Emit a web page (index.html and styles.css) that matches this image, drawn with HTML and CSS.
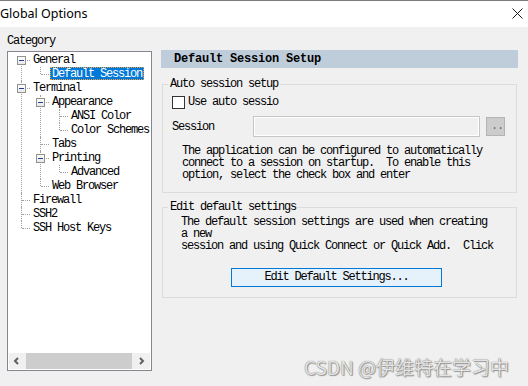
FILE: index.html
```html
<!DOCTYPE html>
<html lang="en">
<head>
    <meta charset="UTF-8">
    <title>Global Options</title>
    <link rel="stylesheet" href="styles.css">
</head>
<body>

<div class="titlebar">
    <span class="title">Global Options</span>
    <svg class="close" width="11" height="11" viewBox="0 0 11 11">
        <path d="M0.5 0.5L10.5 10.5M10.5 0.5L0.5 10.5" stroke="#1a1a1a" stroke-width="1" fill="none"/>
    </svg>
</div>

<div class="main">
    <!-- Category tree -->
    <div class="left">
        <div class="cat-label">Category</div>
        <div class="tree-box">
            <ul class="tree">
                <li>
                    <div class="row"><span class="toggle"></span><span class="label">General</span></div>
                    <ul>
                        <li><div class="row"><span class="label selected">Default Session</span></div></li>
                    </ul>
                </li>
                <li>
                    <div class="row"><span class="toggle"></span><span class="label">Terminal</span></div>
                    <ul>
                        <li>
                            <div class="row"><span class="toggle"></span><span class="label">Appearance</span></div>
                            <ul>
                                <li><div class="row"><span class="label">ANSI Color</span></div></li>
                                <li><div class="row"><span class="label">Color Schemes</span></div></li>
                            </ul>
                        </li>
                        <li><div class="row"><span class="label">Tabs</span></div></li>
                        <li>
                            <div class="row"><span class="toggle"></span><span class="label">Printing</span></div>
                            <ul>
                                <li><div class="row"><span class="label">Advanced</span></div></li>
                            </ul>
                        </li>
                        <li><div class="row"><span class="label">Web Browser</span></div></li>
                    </ul>
                </li>
                <li><div class="row"><span class="label">Firewall</span></div></li>
                <li><div class="row"><span class="label">SSH2</span></div></li>
                <li><div class="row"><span class="label">SSH Host Keys</span></div></li>
            </ul>
            <div class="hscroll">
                <span class="arrow">
                    <svg width="17" height="16" viewBox="0 0 17 16"><path d="M9 5L6 8L9 11" stroke="#606060" stroke-width="2" fill="none"/></svg>
                </span>
                <span class="thumb"></span>
                <span class="arrow arrow-right">
                    <svg width="17" height="16" viewBox="0 0 17 16"><path d="M7 5L10 8L7 11" stroke="#606060" stroke-width="2" fill="none"/></svg>
                </span>
            </div>
        </div>
    </div>

    <!-- Settings page -->
    <div class="right">
        <div class="page-header">Default Session Setup</div>

        <fieldset class="group">
            <legend>Auto session setup</legend>
            <div class="check-row">
                <span class="checkbox"></span>
                <span>Use auto sessio</span>
            </div>
            <div class="session-row">
                <span class="session-label">Session</span>
                <span class="session-input"></span>
                <span class="browse-btn">..</span>
            </div>
            <p class="help">The application can be configured to automatically
connect to a session on startup.  To enable this
option, select the check box and enter</p>
        </fieldset>

        <fieldset class="group group-edit">
            <legend>Edit default settings</legend>
            <p class="help help-edit">The default session settings are used when creating
a new
session and using Quick Connect or Quick Add.  Click</p>
            <button class="edit-btn">Edit Default Settings...</button>
        </fieldset>
    </div>
</div>

<div class="watermark">CSDN @伊维特在学习中</div>

</body>
</html>
```

FILE: styles.css
```css
* {
    box-sizing: border-box;
}
body {
    margin: 0;
    width: 528px;
    height: 386px;
    overflow: hidden;
    background-color: #f0f0f0;
    font-family: "Liberation Mono", "Noto Sans CJK SC", monospace;
    font-size: 12px;
    letter-spacing: -1.2px;
    color: #000;
    position: relative;
}

/* Window title */
.titlebar {
    height: 27px;
    background: #fff;
    border-top: 1px solid #7c7c7c;
    display: flex;
    align-items: center;
    justify-content: space-between;
    padding: 0 5px 1px 0;
}
.title {
    font-family: "Noto Sans", sans-serif;
    font-size: 12.5px;
    letter-spacing: 0;
    color: #000;
}
.close {
    display: block;
}

.main {
    display: flex;
    align-items: flex-start;
    gap: 9px;
    padding-left: 7px;
}

/* Left: category tree */
.left {
    width: 145px;
}
.cat-label {
    margin-top: 7px;
    margin-bottom: 3px;
    height: 14px;
    line-height: 14px;
}
.tree-box {
    height: 320px;
    border: 1px solid #828790;
    background: #fff;
    display: flex;
    flex-direction: column;
}
.tree, .tree ul {
    list-style: none;
    margin: 0;
    padding: 0;
}
.tree {
    flex: 1;
    padding-top: 1px;
}
.tree ul {
    padding-left: 19px;
}
.tree li {
    position: relative;
}
.tree li::before {
    content: "";
    position: absolute;
    left: 13px;
    top: 0;
    bottom: 0;
    border-left: 1px dotted #a0a0a0;
}
.tree li:last-child::before {
    bottom: auto;
    height: 7px;
}
.tree > li:first-child::before {
    top: 7px;
}
.tree li::after {
    content: "";
    position: absolute;
    left: 14px;
    top: 7px;
    width: 8px;
    border-top: 1px dotted #a0a0a0;
}
.row {
    height: 14px;
    line-height: 14px;
    padding-left: 23px;
    white-space: nowrap;
}
.label {
    display: inline-block;
    vertical-align: top;
    height: 13px;
    line-height: 14px;
    padding: 0 2px;
}
.label.selected {
    background: #0078d7;
    color: #fff;
    outline: 1px dotted #f0a040;
    outline-offset: -1px;
}
.toggle {
    position: absolute;
    left: 9px;
    top: 3px;
    width: 9px;
    height: 9px;
    border: 1px solid #919191;
    background: linear-gradient(#ffffff, #e8e8e8);
    z-index: 1;
}
.toggle::after {
    content: "";
    position: absolute;
    left: 1px;
    top: 3px;
    width: 5px;
    height: 1px;
    background: #21409a;
}
.hscroll {
    height: 16px;
    margin: 0 1px 1px 1px;
    background: #f0f0f0;
    display: flex;
}
.arrow {
    width: 17px;
    height: 16px;
}
.arrow svg {
    display: block;
}
.arrow-right {
    margin-left: auto;
}
.thumb {
    width: 106px;
    background: #cdcdcd;
}

/* Right: settings page */
.right {
    width: 357px;
    margin-top: 23px;
}
.page-header {
    height: 18px;
    line-height: 18px;
    background: #bfcddb;
    padding-left: 13px;
    font-weight: bold;
    letter-spacing: -0.2px;
}
.group {
    margin: 10px 1px 0 1px;
    border: 1px solid #dcdcdc;
    padding: 4px 0 11px 9px;
    min-inline-size: 0;
}
.group legend {
    padding: 0 2px;
    margin-left: -4px;
    height: 13px;
    line-height: 13px;
}
.check-row {
    display: flex;
    height: 14px;
    line-height: 15px;
}
.checkbox {
    width: 13px;
    height: 13px;
    margin: 1px 3px 0 0;
    border: 1px solid #333;
    background: #fff;
}
.session-row {
    display: flex;
    align-items: center;
    margin-top: 7px;
    height: 21px;
}
.session-label {
    width: 81px;
}
.session-input {
    width: 227px;
    height: 21px;
    border: 1px solid #c6c6c6;
    box-shadow: inset 0 0 0 1px #fff;
    background: #f0f0f0;
}
.browse-btn {
    width: 19px;
    height: 19px;
    margin-left: 6px;
    border: 1px solid #b4b4b4;
    background: #cccccc;
    color: #6d6d6d;
    line-height: 17px;
    padding-left: 4px;
    white-space: nowrap;
}
.help {
    margin: 8px 0 0 10px;
    line-height: 12px;
    white-space: pre;
}
.group-edit {
    margin-top: 8px;
    padding: 2px 0 10px 9px;
}
.help-edit {
    margin: 0 0 0 9px;
    height: 36px;
    overflow: hidden;
}
.edit-btn {
    display: block;
    margin: 16px 0 0 59px;
    width: 211px;
    height: 19px;
    border: 1px solid #0078d7;
    background: #e5f1fb;
    font-family: "Liberation Mono", monospace;
    font-size: 12px;
    letter-spacing: -1.2px;
    line-height: 17px;
    padding: 0;
    color: #000;
}

/* Screenshot watermark */
.watermark {
    position: absolute;
    left: 304px;
    top: 357px;
    font-family: "Noto Sans CJK SC", "Noto Sans", sans-serif;
    font-size: 19px;
    line-height: 19px;
    letter-spacing: 0;
    color: #e4e4e4;
    text-shadow: 0 0 1px #5a5a5a, 1px 1px 1px #9a9a9a;
}
```
